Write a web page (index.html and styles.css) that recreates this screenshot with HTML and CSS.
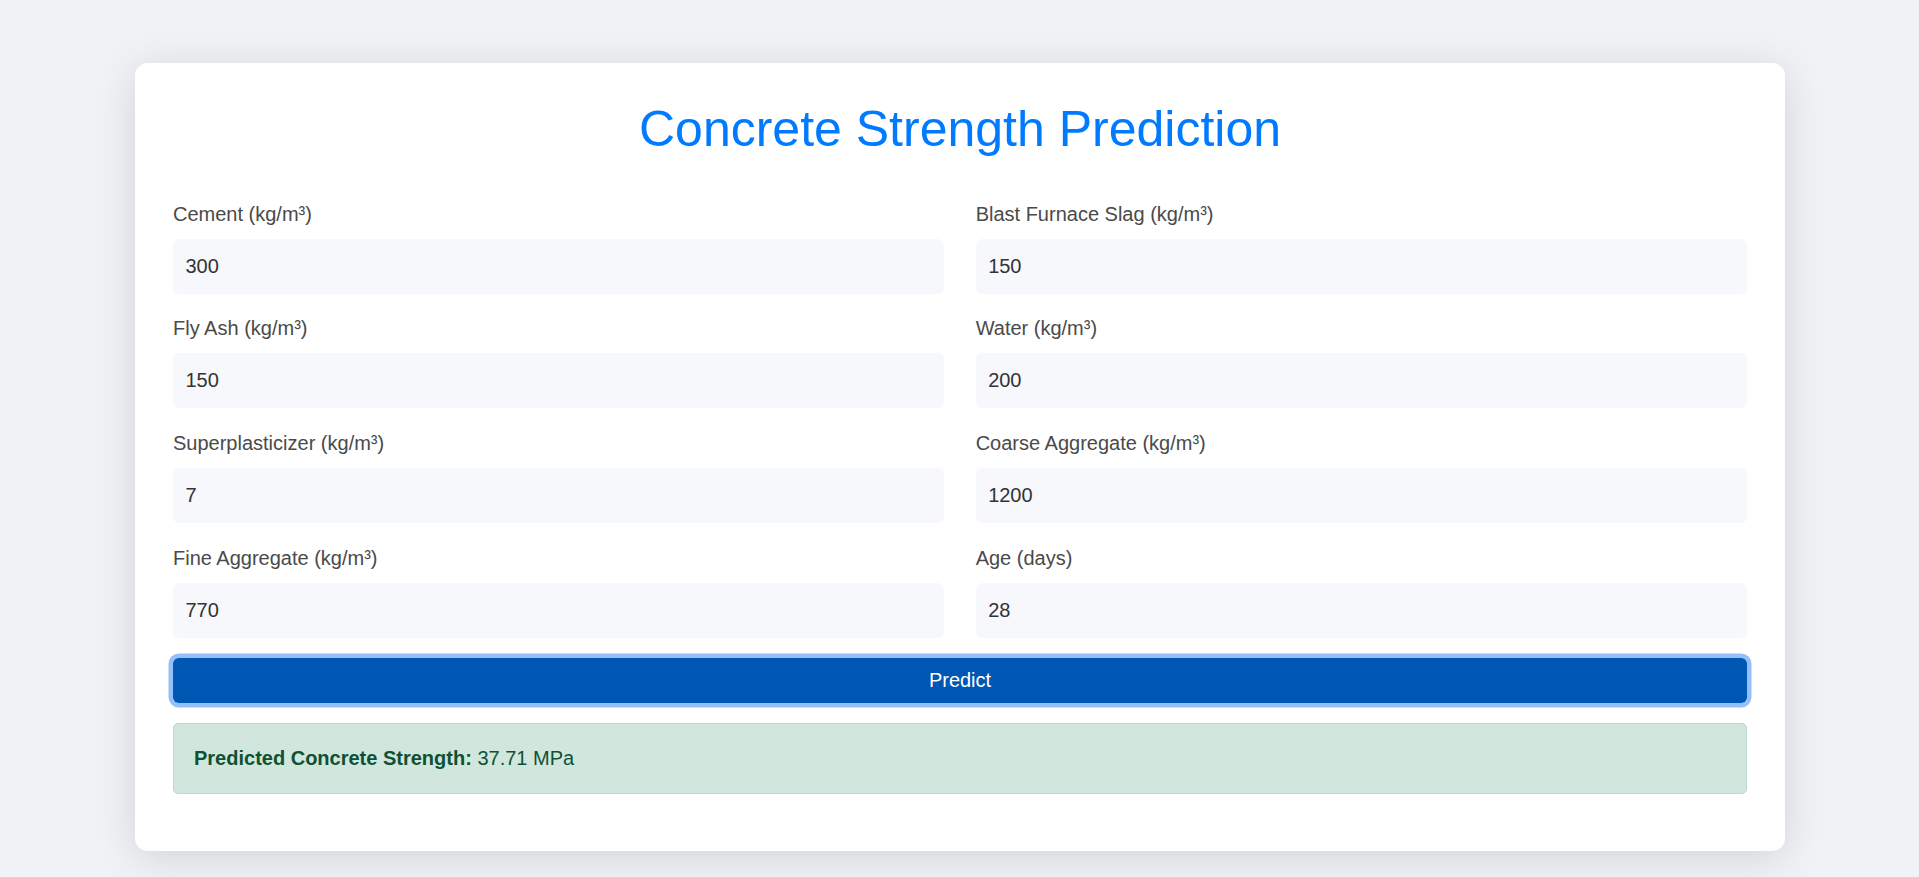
FILE: index.html
```html
<!DOCTYPE html>
<html lang="en">
<head>
<meta charset="utf-8">
<title>Concrete Strength Prediction</title>
<link rel="stylesheet" href="styles.css">
</head>
<body>
<div class="card">
  <h1 class="title">Concrete Strength Prediction</h1>
  <form class="form">
    <div class="grid">
      <div class="field"><label class="label">Cement (kg/m³)</label><input class="input" type="text" value="300"></div>
      <div class="field"><label class="label">Blast Furnace Slag (kg/m³)</label><input class="input" type="text" value="150"></div>
      <div class="field"><label class="label">Fly Ash (kg/m³)</label><input class="input" type="text" value="150"></div>
      <div class="field"><label class="label">Water (kg/m³)</label><input class="input" type="text" value="200"></div>
      <div class="field"><label class="label">Superplasticizer (kg/m³)</label><input class="input" type="text" value="7"></div>
      <div class="field"><label class="label">Coarse Aggregate (kg/m³)</label><input class="input" type="text" value="1200"></div>
      <div class="field"><label class="label">Fine Aggregate (kg/m³)</label><input class="input" type="text" value="770"></div>
      <div class="field"><label class="label">Age (days)</label><input class="input" type="text" value="28"></div>
    </div>
    <button class="btn" type="button">Predict</button>
  </form>
  <div class="result"><strong>Predicted Concrete Strength:</strong> 37.71 MPa</div>
</div>
</body>
</html>
```
FILE: styles.css
```css
* { box-sizing: border-box; }
html, body { margin: 0; padding: 0; }
body {
  background: #f0f2f5;
  font-family: "Liberation Sans", Arial, sans-serif;
  font-size: 20px;
  color: #333;
  padding: 63px 0 40px;
}
.card {
  max-width: 1650px;
  margin: 0 auto;
  background: #fff;
  border-radius: 12.5px;
  padding: 36px 37.5px 37.5px 38.5px;
  box-shadow: 0 6px 40px rgba(0, 0, 0, 0.13);
}
.title {
  margin: 0 0 39.5px;
  font-size: 50px;
  line-height: 60px;
  font-weight: normal;
  color: #007bff;
  text-align: center;
}
.grid {
  display: grid;
  grid-template-columns: 1fr 1fr;
  column-gap: 31.25px;
}
.field {
  display: flex;
  flex-direction: column;
  margin-bottom: 19.8px;
}
.label {
  font-size: 20px;
  line-height: 30px;
  color: #4a4a4a;
  margin-bottom: 10px;
}
.input {
  height: 55px;
  border: none;
  border-radius: 6px;
  background: #f7f8fb;
  padding: 0 12.5px;
  font-family: "Liberation Sans", Arial, sans-serif;
  font-size: 20px;
  color: #333;
  outline: none;
}
.btn {
  display: block;
  width: 100%;
  height: 45px;
  border: none;
  border-radius: 6px;
  background: #0056b3;
  color: #fff;
  font-family: "Liberation Sans", Arial, sans-serif;
  font-size: 20px;
  line-height: 30px;
  box-shadow: 0 0 0 4.5px #94bff9;
  cursor: pointer;
}
.result {
  margin: 20.6px 0 19px;
  padding: 20px;
  border: 1px solid #badbcc;
  border-radius: 5px;
  background: #d1e7dd;
  color: #0f5132;
  font-size: 20px;
  line-height: 29px;
}
.result strong { font-weight: bold; }
```
